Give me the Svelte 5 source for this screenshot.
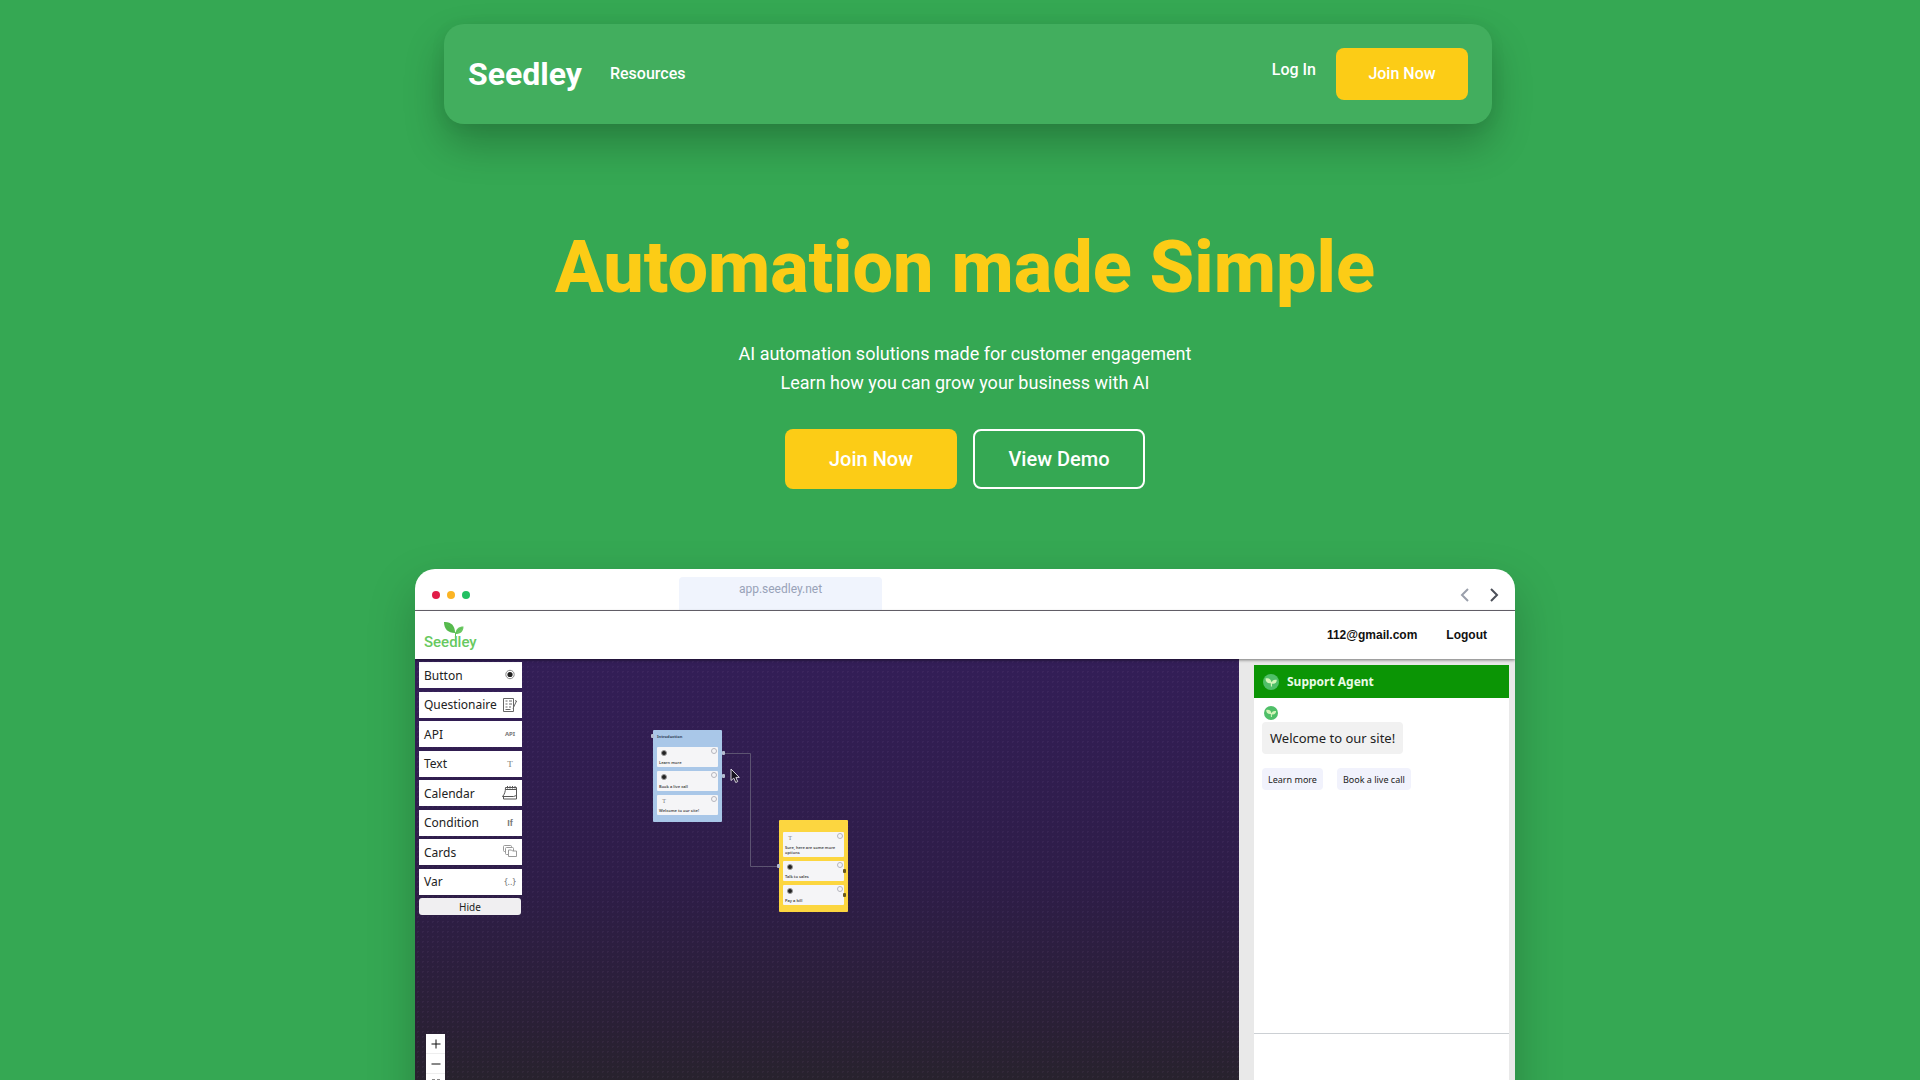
<script>
  const blocks = [
    { label: 'Button', icon: 'radio' },
    { label: 'Questionaire', icon: 'form' },
    { label: 'API', icon: 'api' },
    { label: 'Text', icon: 'text' },
    { label: 'Calendar', icon: 'calendar' },
    { label: 'Condition', icon: 'if' },
    { label: 'Cards', icon: 'cards' },
    { label: 'Var', icon: 'var' },
  ];
  const glyphs = { api: 'API', text: 'T', if: 'If', var: '{..}' };
  const nodes = [
    {
      kind: 'blue',
      title: 'Introduction',
      cards: [
        { mark: 'dot', text: 'Learn more' },
        { mark: 'dot', text: 'Book a live call' },
        { mark: 'T', text: 'Welcome to our site!' },
      ],
    },
    {
      kind: 'yellow',
      title: '',
      cards: [
        { mark: 'T', text: 'Sure, here are some more options' },
        { mark: 'dot', text: 'Talk to sales' },
        { mark: 'dot', text: 'Pay a bill' },
      ],
    },
  ];
</script>

{#snippet sprout()}
  <svg class="sprout" viewBox="0 0 16 16" aria-hidden="true">
    <circle cx="8" cy="8" r="8" fill="#4fbf68" />
    <path d="M2.5 4.5c3-1 6 .5 6 4.500C5 10 2.500 8 2.500 4.500zM8.600 9.500c0-3 2-4.300 5.200-3.700 0 3-2.200 4.600-5.200 3.700zM7.700 8h1.200l.2 4.500H7.900z" fill="#d3f5b8" />
  </svg>
{/snippet}

<div class="page">
  <header>
    <nav class="nav">
      <a class="brand" href="#home">Seedley</a>
      <a class="link" href="#resources">Resources</a>
      <a class="link login" href="#login">Log In</a>
      <button class="btn small">Join Now</button>
    </nav>
  </header>

  <main>
    <section class="hero">
      <h1>Automation made Simple</h1>
      <p>AI automation solutions made for customer engagement<br />Learn how you can grow your business with AI</p>
      <div class="actions">
        <button class="btn">Join Now</button>
        <button class="btn outline">View Demo</button>
      </div>
    </section>

    <section class="window">
      <div class="chrome">
        <div class="dots"><i></i><i></i><i></i></div>
        <div class="tab">app.seedley.net</div>
        <div class="arrows">
          <svg viewBox="0 0 10 16" aria-hidden="true"><path d="M8 2 2 8l6 6" stroke="#9a9fab" /></svg>
          <svg viewBox="0 0 10 16" aria-hidden="true"><path d="m2 2 6 6-6 6" stroke="#4b4f58" /></svg>
        </div>
      </div>

      <div class="appbar">
        <div class="logo">
          <svg viewBox="0 0 22 22" aria-hidden="true">
            <path d="M1 1c7-.5 11 3.500 11 11C5 12 1 8 1 1z" fill="#55b94c" />
            <path d="M12.500 13c0-5 3-7.500 8-7.500 0 5-3 7.500-8 7.500z" fill="#6cc863" />
            <path d="M3 3c4 2 7 5 9.500 9V22M19 7c-3 1.500-5 3-6.500 6" fill="none" stroke="#5cbf54" />
          </svg>
          <span>Seedley</span>
        </div>
        <a href="#account">112@gmail.com</a>
        <a href="#logout">Logout</a>
      </div>

      <div class="work">
        <div class="canvas">
          <div class="palette">
            <div class="blocks">
              {#each blocks as b}
                <button class="block">
                  <span>{b.label}</span>
                  {#if b.icon === 'radio'}
                    <svg viewBox="0 0 16 16"><circle cx="8" cy="7.500" r="4.200" fill="#fff" stroke="#888" /><circle cx="8" cy="7.500" r="2.600" fill="#222" /></svg>
                  {:else if b.icon === 'form'}
                    <svg viewBox="0 0 16 16" fill="none" stroke="#666"><path d="M1.500 1.500h10v13h-10zM3.500 4h2M7 4h3M3.500 7h2M7 7h3M3.500 10h2M7 10h2M3.500 12.500h5M14.500 4l-3.500 7.500" /><path d="M13 3.500l2 1" /></svg>
                  {:else if b.icon === 'calendar'}
                    <svg viewBox="0 0 16 16" fill="none" stroke="#555"><path d="M3.500 2.500h11v9M3.500 2.500c0 4-1 7-3 9h11l3-1M1.500 12v2h13v-3M3.500 4.500h11M5.500 1v2.500M8 1v2.500M10.500 1v2.500M13 1v2.500" /></svg>
                  {:else if b.icon === 'cards'}
                    <svg viewBox="0 0 16 16" fill="#fff" stroke="#999"><rect x="1.500" y="1.500" width="8" height="6" rx="1" /><rect x="3.500" y="3.500" width="8" height="7" rx="1" /><path d="M6.500 6h3l1 1h4v5.500h-8z" /></svg>
                  {:else}
                    <em class={b.icon}>{glyphs[b.icon]}</em>
                  {/if}
                </button>
              {/each}
            </div>
            <button class="hide">Hide</button>
          </div>

          <svg class="wire" viewBox="0 0 60 118" aria-hidden="true"><path d="M1 2.500h26.500v113H56" fill="none" stroke="#5d5472" /></svg>

          {#each nodes as n}
            <article class="node {n.kind}">
              <h2>{n.title}</h2>
              {#each n.cards as c}
                <div class="card">
                  {#if c.mark === 'dot'}<i class="mark"></i>{:else}<b class="mark">{c.mark}</b>{/if}
                  <span>{c.text}</span>
                  <u></u>
                </div>
              {/each}
              <s class="in"></s>
              <s class="out one"></s>
              <s class="out two"></s>
            </article>
          {/each}

          <svg class="cursor" viewBox="0 0 10 16" aria-hidden="true"><path d="M1 1v11.500l2.800-2.400 1.900 4.400 2-.9-1.800-4.200H9.300z" fill="#17121f" stroke="#d8d4de" /></svg>

          <div class="zoom">
            <button aria-label="Zoom in"><svg viewBox="0 0 10 10"><path d="M5 .5v9M.5 5h9" /></svg></button>
            <button aria-label="Zoom out"><svg viewBox="0 0 10 10"><path d="M.5 5h9" /></svg></button>
            <button aria-label="Fit view"><svg viewBox="0 0 10 10"><path d="M1 4V1h3M6 1h3v3M9 6v3H6M4 9H1V6" /></svg></button>
          </div>
        </div>

        <aside>
          <div class="chat">
            <div class="chat-head">{@render sprout()}<strong>Support Agent</strong></div>
            <div class="chat-body">
              {@render sprout()}
              <p>Welcome to our site!</p>
              <div class="replies">
                <button>Learn more</button>
                <button>Book a live call</button>
              </div>
            </div>
            <div class="compose"></div>
          </div>
        </aside>
      </div>
    </section>
  </main>
</div>

<style>
  :global(body) { background: #35a853; }
  .page {
    box-sizing: border-box;
    height: 100vh;
    overflow: hidden;
    padding-top: 24px;
    font-family: Roboto, "Liberation Sans", sans-serif;
    color: #fff;
  }
  header { padding-left: 16px; }
  main { padding-left: 10px; }
  button { font: inherit; color: inherit; border: 0; padding: 0; margin: 0; cursor: pointer; }
  a { color: inherit; text-decoration: none; }
  .nav {
    box-sizing: border-box;
    display: flex;
    align-items: center;
    max-width: 1048px;
    min-height: 100px;
    margin: 0 auto;
    padding: 24px;
    border-radius: 20px;
    background: #42ae5e;
    box-shadow: 0 20px 40px rgba(0, 0, 0, 0.24), 0 2px 16px rgba(0, 0, 0, 0.06);
  }
  .brand { font-size: 32px; font-weight: 700; }
  .link { font-size: 16px; font-weight: 500; margin-left: 28px; padding-bottom: 2px; }
  .login { margin-left: auto; margin-right: 20px; padding-bottom: 9px; }
  .btn {
    width: 172px;
    height: 60px;
    border-radius: 8px;
    background: #fccc16;
    font-size: 20px;
    font-weight: 500;
  }
  .small { width: 132px; height: 52px; padding-bottom: 2px; font-size: 16px; }
  .outline { background: none; border: 2px solid #fff; }
  .hero { text-align: center; padding-top: 99px; }
  h1 { margin: 0; font-size: 72px; line-height: 90px; font-weight: 800; color: #fccc16; }
  .hero p { margin: 26px 0 32px; font-size: 18px; line-height: 29px; }
  .actions { display: flex; justify-content: center; gap: 16px; }

  .window {
    max-width: 1100px;
    margin: 80px auto 0;
    border-radius: 20px 20px 0 0;
    overflow: hidden;
    background: #fff;
    color: #222;
    box-shadow: 0 20px 48px rgba(0, 0, 0, 0.22);
  }
  .chrome {
    display: grid;
    grid-template-columns: 264px 203px 1fr;
    height: 41px;
    border-bottom: 1px solid #6b6670;
  }
  .dots { display: flex; gap: 7px; padding: 22px 0 0 17px; }
  .dots i { width: 8px; height: 8px; border-radius: 50%; background: #e11d48; }
  .dots i:nth-child(2) { background: #fbb424; }
  .dots i:nth-child(3) { background: #22c062; }
  .tab {
    margin-top: 8px;
    border-radius: 4px 4px 0 0;
    background: #f0f4fd;
    color: #98a2b8;
    font-size: 12px;
    line-height: 25px;
    text-align: center;
  }
  .arrows { display: flex; justify-content: flex-end; gap: 19px; padding: 18px 16px 0 0; }
  .arrows svg { width: 10px; height: 16px; fill: none; stroke-width: 2; }
  .appbar {
    position: relative;
    z-index: 1;
    display: flex;
    align-items: center;
    gap: 29px;
    height: 48px;
    padding: 0 28px 0 9px;
    background: #fff;
    box-shadow: 0 1px 3px rgba(0, 0, 0, 0.5);
    font: 700 12px "Liberation Sans", sans-serif;
    color: #111;
  }
  .logo { display: grid; justify-items: center; margin-right: auto; color: #68c95f; font: 500 15px/16px Roboto, sans-serif; }
  .logo svg { width: 22px; height: 22px; margin-bottom: -9px; margin-left: 8px; }

  .work { display: flex; height: 640px; font-family: "Noto Sans", sans-serif; }
  .canvas {
    position: relative;
    flex: 1;
    background:
      radial-gradient(circle, rgba(160, 120, 190, 0.08) 1px, transparent 1px) 0 0 / 5px 5px,
      linear-gradient(#331e57, #2e1d48 35%, #2a2035 58%, #27232b 68%, #232323);
  }
  .palette { width: 103px; padding: 3px 0 0 4px; }
  .blocks { display: flex; flex-direction: column; justify-content: space-between; height: 233px; }
  .block {
    display: flex;
    justify-content: space-between;
    align-items: center;
    height: 26px;
    padding: 0 4px 0 5px;
    background: #fff;
    font-size: 12px;
  }
  .block svg, .block em { width: 16px; height: 16px; line-height: 16px; font-style: normal; text-align: center; color: #777; }
  .block em { font-size: 9px; }
  .block em.api { font-size: 6px; font-weight: 700; }
  .block em.text { font-family: "Liberation Serif", serif; }
  .block em.if { font-family: "Liberation Sans", sans-serif; font-weight: 700; }
  .hide {
    display: block;
    width: 102px;
    height: 17px;
    margin-top: 3px;
    border-radius: 3px;
    background: #f0eff1;
    font-size: 10px;
    line-height: 16px;
  }

  .wire { position: absolute; left: 308px; top: 92px; width: 60px; height: 118px; }
  .node {
    position: absolute;
    box-sizing: border-box;
    display: flex;
    flex-direction: column;
    gap: 4px;
    width: 69px;
    height: 92px;
    padding: 4px 4px 7px;
    border-radius: 1px;
  }
  .blue { left: 238px; top: 71px; background: #a9c7e8; }
  .yellow { left: 364px; top: 161px; background: #fcd640; }
  .node h2 { margin: 0; height: 9px; font-size: 4px; line-height: 5px; color: #33465c; }
  .yellow h2 { height: 4px; }
  .card { position: relative; flex: 1; padding: 3px 2px 0; border-radius: 1px; background: #f5f5f7; }
  .yellow .card:nth-child(2) { flex: 1 0 5px; }
  .card span { display: block; margin-top: 4px; font-size: 4px; line-height: 5px; font-weight: 600; color: #444; }
  .mark { display: block; width: 6px; height: 6px; margin-left: 2px; font: 6px/6px "Liberation Serif", serif; text-align: center; color: #777; }
  i.mark { box-sizing: border-box; border: 1px solid #999; border-radius: 50%; background: #222; }
  .card u { position: absolute; right: 1px; top: 1px; width: 4px; height: 4px; border: 1px solid #b5b5bd; border-radius: 50%; }
  .node s { position: absolute; width: 3px; height: 4px; background: #b4bccf; border-radius: 1px; }
  .in { left: -2px; top: 4px; }
  .yellow .in { top: 44px; }
  .out { right: -3px; }
  .one { top: 21px; }
  .two { top: 44px; }
  .yellow .out { right: 2px; background: #6b5a1c; }
  .yellow .one { top: 49px; }
  .yellow .two { top: 73px; }
  .cursor { position: absolute; left: 315px; top: 109px; width: 10px; height: 16px; }

  .zoom { position: absolute; left: 11px; top: 375px; width: 19px; background: #fff; }
  .zoom button { display: grid; place-items: center; width: 100%; height: 20px; background: #fff; border-bottom: 1px solid #eee; }
  .zoom svg { width: 10px; height: 10px; fill: none; stroke: #111; stroke-width: 1; }

  aside { box-sizing: border-box; width: 276px; padding: 6px 6px 0 15px; background: #e9e9e9; }
  .chat { height: 100%; background: #fff; }
  .chat-head {
    display: flex;
    align-items: center;
    gap: 8px;
    height: 33px;
    padding-left: 9px;
    background: #0b9505;
    color: #e9fbe6;
    font-size: 12px;
  }
  .sprout { display: block; width: 14px; height: 14px; }
  .chat-head .sprout { width: 16px; height: 16px; }
  .chat-body { box-sizing: border-box; height: 336px; padding: 8px; border-bottom: 1px solid #ccd0d4; }
  .chat-body .sprout { margin-left: 2px; }
  .chat-body p { width: fit-content; margin: 2px 0 14px; padding: 0 8px; border-radius: 4px; background: #f1f1f1; font-size: 13px; line-height: 32px; }
  .replies { display: flex; gap: 14px; }
  .replies button { height: 22px; padding: 0 6px; border-radius: 4px; background: #f1f2fc; font-size: 9px; }
</style>
